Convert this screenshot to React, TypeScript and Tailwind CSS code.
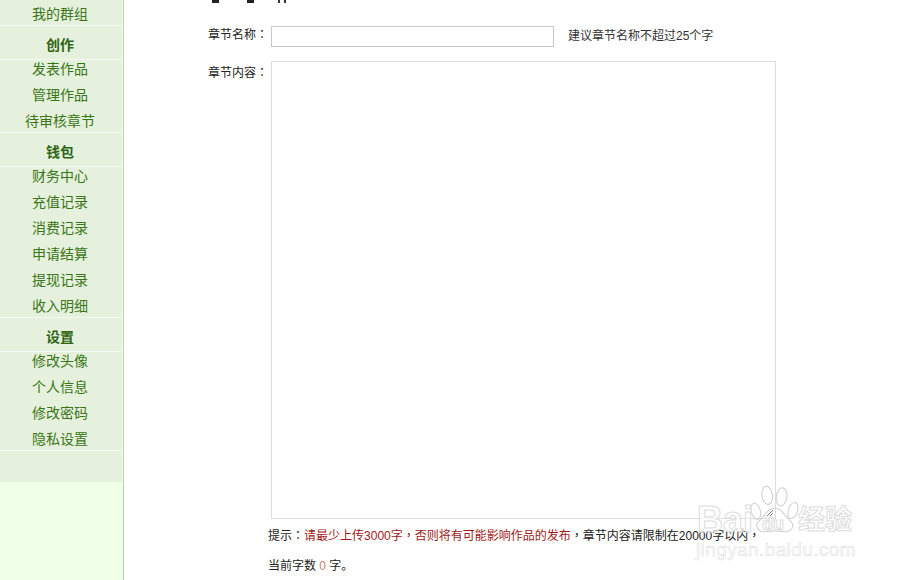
const groups = [
  { title: "创作", items: ["发表作品", "管理作品", "待审核章节"] },
  { title: "钱包", items: ["财务中心", "充值记录", "消费记录", "申请结算", "提现记录", "收入明细"] },
  { title: "设置", items: ["修改头像", "个人信息", "修改密码", "隐私设置"] },
];

function Item({ label }: { label: string }) {
  return <div className="h-[26px] pr-[2px] leading-[18px] text-center text-[14px] text-[#3a7518] last:h-[18px]">{label}</div>;
}

function P({ c }: { c: string }) {
  return <span className="font-['Noto_Sans_CJK_TC',sans-serif]">{c}</span>;
}

function Watermark() {
  const stroke = "[-webkit-text-stroke:1px_#dcdcdc] text-white/70";
  return (
    <div className="absolute left-[696px] top-[481px] w-[200px] h-[90px] pointer-events-none font-['Liberation_Sans',sans-serif]">
      <svg className="absolute left-[53px] top-[2px]" width="50" height="52" viewBox="0 0 66 62" fill="none" stroke="#d0d0d0" strokeWidth="1.4">
        <ellipse cx="9" cy="34" rx="6" ry="11" transform="rotate(-15 9 34)" />
        <ellipse cx="24" cy="13" rx="7" ry="12" transform="rotate(-8 24 13)" />
        <ellipse cx="43" cy="15" rx="7" ry="12" transform="rotate(8 43 15)" />
        <ellipse cx="58" cy="33" rx="6" ry="11" transform="rotate(18 58 33)" />
        <path d="M34 30 C24 30 22 40 14 46 C6 53 12 62 22 61 C29 60 39 60 46 61 C56 62 62 53 54 46 C46 40 44 30 34 30 Z" />
      </svg>
      <span className={`absolute left-[1px] top-[21px] text-[36px] leading-none font-bold ${stroke}`}>Bai</span>
      <span className={`absolute left-[66px] top-[34px] text-[18px] leading-none font-bold ${stroke}`}>du</span>
      <span className={`absolute left-[102px] top-[23px] text-[27px] leading-none font-bold font-['Noto_Sans_CJK_SC',sans-serif] ${stroke}`}>经验</span>
      <span className="absolute left-[0px] top-[59px] text-[19px] leading-none tracking-[0.4px] text-white [-webkit-text-stroke:0.6px_#e2e2e2]">jingyan.baidu.com</span>
    </div>
  );
}

export default function App() {
  return (
    <div className="relative flex w-[906px] h-[580px] overflow-hidden bg-white font-['Liberation_Sans','Noto_Sans_CJK_SC',sans-serif] text-[12px] text-[#222]">
      <aside className="w-[124px] shrink-0 h-full bg-[#f0ffe8] border-r border-[#b9d3ae]">
        <div className="bg-[#e5f1dc] h-[482px] w-[122px]">
          <div className="h-[26px] pt-[5px] pr-[2px] leading-[18px] text-center text-[14px] text-[#3a7518] border-b border-[#f3f9ee]">我的群组</div>
          {groups.map((g) => (
            <div key={g.title} className="border-b border-[#f3f9ee] pb-[2px]">
              <div className="h-[34px] pt-[10px] pr-[2px] leading-[18px] text-center text-[14px] font-bold text-[#2f6414] border-b border-[#f3f9ee]">{g.title}</div>
              {g.items.map((i) => <Item key={i} label={i} />)}
            </div>
          ))}
        </div>
      </aside>
      <main className="flex-1 relative">
        <div className="h-[3px] overflow-hidden ml-[88px] flex gap-[28px] items-start text-[#222]">
          <div className="w-[7px] h-[3px] bg-[#222]" />
          <div className="w-[7px] h-[3px] bg-[#222]" />
          <div className="w-[8px] h-[3px] ml-[-4px] border-x-2 border-[#333]" />
        </div>
        <div className="flex mt-[23px] ml-[84px] items-start">
          <div className="w-[63px] leading-[16px]">章节名称<P c="：" /></div>
          <div className="w-[283px] h-[21px] border border-[#c8c8c8] bg-white" />
          <div className="ml-[14px] mt-[2px] leading-[16px] text-[#333]">建议章节名称不超过25个字</div>
        </div>
        <div className="flex mt-[14px] ml-[84px] items-start">
          <div className="w-[63px] leading-[16px] mt-[3px]">章节内容<P c="：" /></div>
          <div className="relative w-[505px] h-[458px] border border-[#dcdcdc] bg-white">
            <svg className="absolute right-[1px] bottom-[1px]" width="8" height="8" viewBox="0 0 8 8" stroke="#777" strokeWidth="1">
              <path d="M1 7 L7 1 M4 7 L7 4" />
            </svg>
          </div>
        </div>
        <div className="ml-[144px] mt-[8px] leading-[16px] whitespace-nowrap">
          提示<P c="：" /><span className="text-[#a01818]">请最少上传3000字<P c="，" />否则将有可能影响作品的发布</span><P c="，" />章节内容请限制在20000字以内<P c="，" />
        </div>
        <div className="ml-[144px] mt-[14px] leading-[16px]">
          当前字数 <span className="text-[#c9826a]">0</span> 字。
        </div>
      </main>
      <Watermark />
    </div>
  );
}
